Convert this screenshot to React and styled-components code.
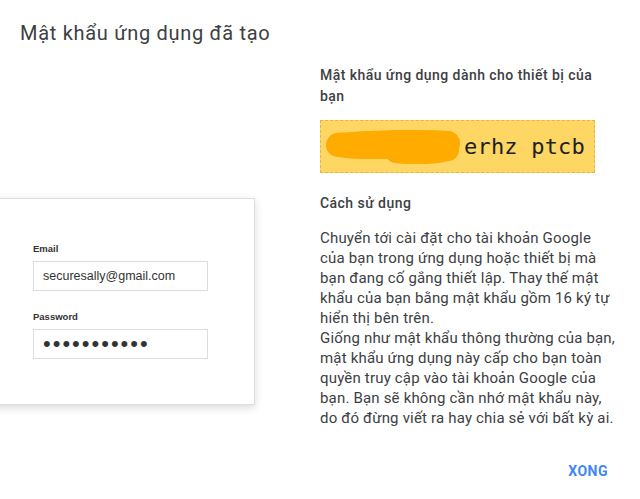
import React from "react";
import styled, { createGlobalStyle } from "styled-components";

const GlobalStyle = createGlobalStyle`
  body {
    margin: 0;
    background: #fff;
    font-family: Roboto, "Noto Sans", Arial, sans-serif;
  }
`;

const Dialog = styled.div`
  width: 640px;
  height: 499px;
  overflow: hidden;
  box-sizing: border-box;
  padding-top: 19px;
  background: #fff;
`;

const Title = styled.h1`
  margin: 0 0 0 20px;
  font-size: 20px;
  line-height: 28px;
  font-weight: 400;
  letter-spacing: 0.7px;
  color: #3c4043;
`;

const Columns = styled.div`
  display: flex;
  align-items: flex-start;
  margin-top: 18px;
`;

const Illustration = styled.div`
  width: 320px;
  flex-shrink: 0;
  padding-top: 133px;
`;

const LoginCard = styled.div`
  width: 275px;
  margin-left: -20px;
  box-sizing: border-box;
  padding: 44px 0 45px 52px;
  background: #fff;
  border: 1px solid #dedede;
  box-shadow: 0 3px 8px rgba(0, 0, 0, 0.14);
  font-family: "Liberation Sans", Arial, sans-serif;
`;

const Field = styled.div`
  & + & {
    margin-top: 20px;
  }
`;

const FieldLabel = styled.div`
  font-size: 9.5px;
  line-height: 12px;
  font-weight: 700;
  color: #333;
  margin-bottom: 6px;
`;

const FakeInput = styled.div`
  width: 175px;
  height: 30px;
  box-sizing: border-box;
  border: 1px solid #dcdcdc;
  padding-left: 9px;
  display: flex;
  align-items: center;
  color: #333;
  font-size: ${(p) => (p.$masked ? "22px" : "12.5px")};
  letter-spacing: ${(p) => (p.$masked ? "2px" : "0")};
`;

const Info = styled.div`
  width: 298px;
  flex-shrink: 0;
  color: #3c4043;
`;

const Heading = styled.h2`
  margin: 0;
  font-size: 14px;
  line-height: 21px;
  font-weight: 500;
  letter-spacing: 0.45px;
  color: #3c4043;
`;

const PasswordBox = styled.div`
  margin-top: 13px;
  width: 275px;
  height: 53px;
  box-sizing: border-box;
  border: 1px dashed #e4b83c;
  background: #fdd663;
  display: flex;
  align-items: center;
  padding-left: 5px;
  gap: 2px;
`;

const PasswordText = styled.span`
  font-family: "DejaVu Sans Mono", "Liberation Mono", monospace;
  font-size: 22px;
  letter-spacing: 0.2px;
  color: #202124;
`;

const UsageHeading = styled(Heading)`
  margin-top: 20px;
  line-height: 20px;
`;

const Paragraph = styled.p`
  margin: 0;
  font-size: 15px;
  line-height: 20px;
  letter-spacing: 0.18px;
  color: #3c4043;
`;

const Body = styled.div`
  margin-top: 15px;
`;

const Actions = styled.div`
  display: flex;
  justify-content: flex-end;
  padding-right: 24px;
  margin-top: 33px;
`;

const TextButton = styled.button`
  border: none;
  background: none;
  padding: 0 8px;
  font-family: Roboto, Arial, sans-serif;
  font-size: 14px;
  line-height: 20px;
  font-weight: 700;
  letter-spacing: 0.5px;
  color: #4285f4;
  cursor: pointer;
`;

function Scribble() {
  return (
    <svg width="136" height="34" viewBox="0 0 136 34" aria-hidden="true">
      <g stroke="#ffab00" strokeLinecap="round" fill="none">
        <path d="M12 15 C 40 12, 90 11, 122 13" strokeWidth="24" />
        <path d="M70 22 C 90 24, 110 23, 122 20" strokeWidth="22" />
        <path d="M14 20 C 30 23, 50 22, 70 22" strokeWidth="14" />
      </g>
    </svg>
  );
}

export default function App() {
  return (
    <>
      <GlobalStyle />
      <Dialog>
        <Title>Mật khẩu ứng dụng đã tạo</Title>
        <Columns>
          <Illustration>
            <LoginCard>
              <Field>
                <FieldLabel>Email</FieldLabel>
                <FakeInput>securesally@gmail.com</FakeInput>
              </Field>
              <Field>
                <FieldLabel>Password</FieldLabel>
                <FakeInput $masked>•••••••••••</FakeInput>
              </Field>
            </LoginCard>
          </Illustration>
          <Info>
            <Heading>Mật khẩu ứng dụng dành cho thiết bị của bạn</Heading>
            <PasswordBox>
              <Scribble />
              <PasswordText>erhz ptcb</PasswordText>
            </PasswordBox>
            <UsageHeading>Cách sử dụng</UsageHeading>
            <Body>
              <Paragraph>
                Chuyển tới cài đặt cho tài khoản Google của bạn trong ứng dụng
                hoặc thiết bị mà bạn đang cố gắng thiết lập. Thay thế mật khẩu
                của bạn bằng mật khẩu gồm 16 ký tự hiển thị bên trên.
              </Paragraph>
              <Paragraph>
                Giống như mật khẩu thông thường của bạn, mật khẩu ứng dụng này
                cấp cho bạn toàn quyền truy cập vào tài khoản Google của bạn.
                Bạn sẽ không cần nhớ mật khẩu này, do đó đừng viết ra hay chia
                sẻ với bất kỳ ai.
              </Paragraph>
            </Body>
          </Info>
        </Columns>
        <Actions>
          <TextButton>XONG</TextButton>
        </Actions>
      </Dialog>
    </>
  );
}
